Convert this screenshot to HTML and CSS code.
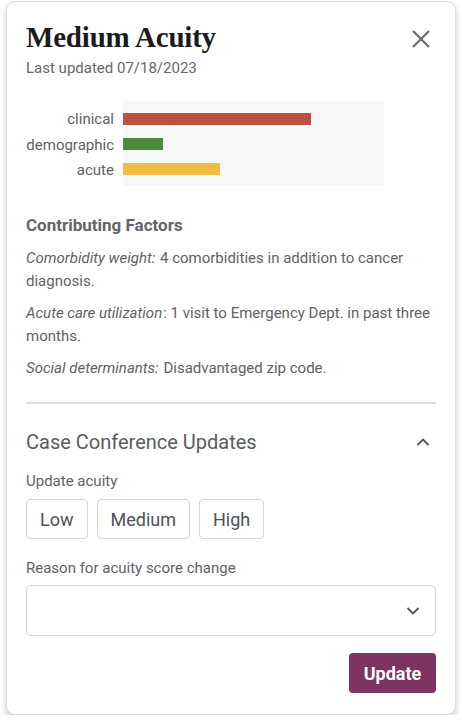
FILE: index.html
```html
<!DOCTYPE html>
<html>
<head>
<meta charset="utf-8">
<link rel="stylesheet" href="styles.css">
</head>
<body>
<div class="card">
  <header class="head">
    <div>
      <h1 class="title">Medium Acuity</h1>
      <div class="sub">Last updated 07/18/2023</div>
    </div>
    <button class="close" aria-label="Close">
      <svg width="20" height="20" viewBox="0 0 20 20"><path d="M2 2 L18 18 M18 2 L2 18" stroke="#6b6b6b" stroke-width="2.2" fill="none"/></svg>
    </button>
  </header>

  <div class="chart">
    <div class="labels">
      <span>clinical</span>
      <span>demographic</span>
      <span>acute</span>
    </div>
    <div class="plot">
      <div class="bar red" style="width:188px"></div>
      <div class="bar green" style="width:40px"></div>
      <div class="bar yellow" style="width:97px"></div>
    </div>
  </div>

  <h2 class="factors">Contributing Factors</h2>
  <p class="para"><em>Comorbidity weight:</em> 4 comorbidities in addition to cancer diagnosis.</p>
  <p class="para"><em>Acute care utilization</em>: 1 visit to Emergency Dept. in past three months.</p>
  <p class="para"><em>Social determinants:</em> Disadvantaged zip code.</p>

  <hr class="divider">

  <div class="sect-head">
    <h2 class="sect-title">Case Conference Updates</h2>
    <svg width="14" height="10" viewBox="0 0 14 10"><path d="M1.5 8 L7 2.5 L12.5 8" stroke="#555" stroke-width="1.8" fill="none"/></svg>
  </div>

  <div class="label">Update acuity</div>
  <div class="choices">
    <button class="choice">Low</button>
    <button class="choice">Medium</button>
    <button class="choice">High</button>
  </div>

  <div class="label reason">Reason for acuity score change</div>
  <div class="select">
    <svg width="14" height="10" viewBox="0 0 14 10"><path d="M1.5 2 L7 7.5 L12.5 2" stroke="#555" stroke-width="1.8" fill="none"/></svg>
  </div>

  <div class="actions">
    <button class="update">Update</button>
  </div>
</div>
</body>
</html>
```
FILE: styles.css
```css
* { box-sizing: border-box; }
html, body { margin: 0; padding: 0; background: #fff; }
body { font-family: Roboto, "Liberation Sans", sans-serif; color: #5f6166; }

.card {
  margin: 1px 6px 0;
  width: 450px;
  height: 714px;
  border: 1px solid #dcdcdc;
  border-radius: 9px;
  box-shadow: 0 4px 6px rgba(0,0,0,0.2);
  padding: 18px 19px 0 19px;
  background: #fff;
}

.head { display: flex; justify-content: space-between; align-items: flex-start; }
.title {
  margin: 0;
  font-family: "Liberation Serif", "Times New Roman", serif;
  font-weight: bold;
  font-size: 29px;
  line-height: 34px;
  color: #1b1b1b;
  letter-spacing: -0.2px;
}
.sub { font-size: 15px; line-height: 20px; margin-top: 4px; color: #65676b; }
.close { border: 0; background: none; padding: 0; margin: 9px 5px 0 0; width: 20px; height: 20px; }

.chart { display: flex; margin-top: 23px; }
.labels {
  width: 88px;
  display: flex; flex-direction: column; align-items: flex-end;
  padding-top: 6px;
  font-size: 15px;
  line-height: 25.5px;
  color: #5f6166;
  margin-right: 9px;
  white-space: nowrap;
}
.plot {
  width: 261px; height: 85px;
  background: #f7f7f7;
  padding-top: 12px;
  display: flex; flex-direction: column; gap: 13px;
}
.bar { height: 12px; }
.red { background: #bb5242; }
.green { background: #4c8a3c; }
.yellow { background: #f2bc44; }

.factors { margin: 28px 0 0; font-size: 17px; line-height: 22px; font-weight: bold; color: #63656a; }
.para { margin: 11px 0 0; font-size: 15px; line-height: 23px; color: #5f6166; }
.para + .para { margin-top: 9px; }
.para em { font-style: italic; margin-right: 1px; }

.divider { border: 0; border-top: 2px solid #dedede; margin: 22px 0 0; }

.sect-head { display: flex; justify-content: space-between; align-items: center; margin-top: 25px; padding-right: 6px; }
.sect-title { margin: 0; font-size: 20px; font-weight: normal; line-height: 26px; color: #5a5c60; }

.label { font-size: 15px; line-height: 20px; margin-top: 16px; color: #5f6166; }
.choices { display: flex; gap: 9px; margin-top: 8px; }
.choice {
  font-family: Roboto, "Liberation Sans", sans-serif;
  font-size: 18px; color: #505256;
  background: #fff;
  border: 1px solid #d4d4d4; border-radius: 4px;
  height: 40px; padding: 0 13px;
}
.reason { margin-top: 19px; }
.select {
  margin-top: 7px;
  height: 51px;
  border: 1px solid #d4d4d4; border-radius: 5px;
  display: flex; align-items: center; justify-content: flex-end;
  padding-right: 15px;
}
.actions { display: flex; justify-content: flex-end; margin-top: 17px; }
.update {
  font-family: Roboto, "Liberation Sans", sans-serif;
  font-size: 18px; font-weight: bold; color: #fff;
  background: #7d3462;
  border: 0; border-radius: 4px;
  height: 40px; width: 87px;
}
```
